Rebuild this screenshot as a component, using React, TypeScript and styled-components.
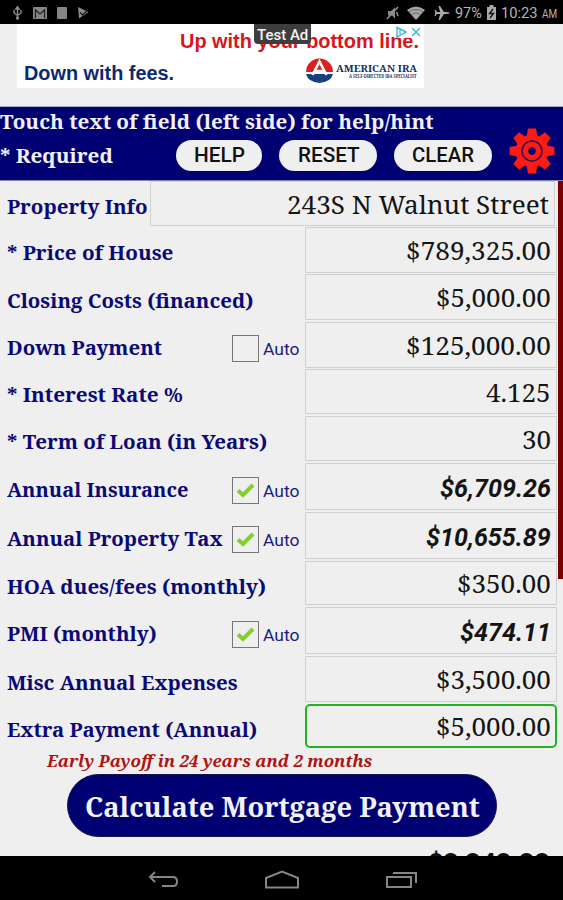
import React, { useLayoutEffect, useRef, useState } from "react";
import styled, { createGlobalStyle } from "styled-components";

const Global = createGlobalStyle`
  * { box-sizing: border-box; }
  body { margin: 0; background: #efefef; overflow: hidden; }
`;
const serif = `"Noto Serif", "Droid Serif", "DejaVu Serif Condensed", "DejaVu Serif", serif`;

const Screen = styled.div`
  width: 563px; height: 900px; display: flex; flex-direction: column;
  background: #efefef; overflow: hidden; font-family: ${serif};
`;
const FitBox = styled.span<{ $w: number }>`
  display: block; flex: none; width: ${p => p.$w}px; white-space: nowrap;
`;
const FitInner = styled.span`
  display: inline-block; transform-origin: 0 50%; white-space: nowrap;
`;
/* Condenses or widens a line of text so that it spans the given width. */
function Fit({ w, children }: { w: number; children: React.ReactNode }) {
  const ref = useRef<HTMLSpanElement>(null);
  const [scale, setScale] = useState(1);
  useLayoutEffect(() => {
    if (ref.current) setScale(w / ref.current.offsetWidth);
  }, [w]);
  return (
    <FitBox $w={w}>
      <FitInner ref={ref} style={{ transform: `scaleX(${scale})` }}>{children}</FitInner>
    </FitBox>
  );
}

const StatusBar = styled.header`
  height: 24px; flex: none; background: #000; color: #b4b4b4; display: flex;
  justify-content: space-between; padding: 1px 6px 0 12px; font: 15.5px/24px Roboto, sans-serif;
`;
const IconRow = styled.div<{ $gap: number }>`
  display: flex; align-items: center; gap: ${p => p.$gap}px;
`;
const Meridiem = styled.span`font-size: 12px; padding-top: 2px;`;
const AdArea = styled.section`
  height: 83px; flex: none; padding-left: 17px; border-bottom: 1px solid #a8a8cc;
`;
const Ad = styled.div`
  position: relative; width: 407px; height: 64px; background: #fff;
  font-family: "Liberation Sans", Arial, sans-serif; font-weight: 700; font-size: 20px; line-height: 24px;
`;
const AdTop = styled.div`color: #d9141c; padding: 5px 0 0 163px;`;
const AdBottom = styled.div`display: flex; color: #0a2a72; padding: 8px 0 0 7px;`;
const AdBadge = styled.div`
  position: absolute; left: 237px; top: 0; width: 57px; height: 20px; border-radius: 0 0 4px 4px;
  background: #3d3d3d; color: #f4f4f4; font: 500 15px/20px Roboto, sans-serif; padding: 1px 0 0 3px;
`;
const AdChoices = styled.div`position: absolute; left: 378px; top: 2px; height: 12px; display: flex; background: #fffc;`;
const Sponsor = styled.div`
  position: absolute; left: 288px; top: 33px; display: flex; gap: 2px;
`;
const SponsorText = styled.div`
  color: #17305f; font: 700 9.5px/9px ${serif}; padding-top: 7px; display: flex; flex-direction: column;
`;
const SponsorSmall = styled.div`font-size: 4.5px; line-height: 6px; padding-left: 13px;`;

const Banner = styled.section`
  height: 74px; flex: none; background: #000073; color: #f1f1fa; font-weight: 700; font-size: 20.5px; line-height: 28px;
  border-bottom: 1px solid #8585b0;
`;
const BannerRow = styled.div`display: flex; align-items: center; height: 40px;`;
const Required = styled.div`padding-bottom: 1px;`;
const Pill = styled.button<{ $w: number; $ml: number }>`
  width: ${p => p.$w}px; margin: 0 0 0 ${p => p.$ml}px; height: 31px; border: 0; border-radius: 16px;
  background: #efefef; color: #111; padding: 0; display: flex; justify-content: center; align-items: center;
  font: 500 20px/31px Roboto, sans-serif;
`;
const GearButton = styled.div`margin: -8px 0 0 17px; height: 46px;`;

const Body = styled.main`position: relative; flex: 1; min-height: 0; overflow: hidden;`;
const ScrollThumb = styled.div`
  position: absolute; right: 0; top: 0; width: 5px; height: 398px; background: #780000;
`;
const Row = styled.div<{ $h: number }>`
  display: flex; height: ${p => p.$h}px; padding-left: 7px;
`;
const Label = styled.div<{ $w: number }>`
  width: ${p => p.$w}px; flex: none; display: flex; align-items: center; justify-content: space-between;
  color: #0a0a76; font-weight: 700; font-size: 19.5px; line-height: 26px; padding-top: 5px;
`;
const Auto = styled.label`
  display: flex; align-items: center; gap: 4px; width: 73px; color: #1c1c7c;
  font: 17px/20px Roboto, sans-serif;
`;
const AutoText = styled.span`padding-top: 1px;`;
const Check = styled.span`
  width: 27px; height: 27px; border: 1.5px solid #777; display: flex; align-items: center; justify-content: center;
`;
const Field = styled.div<{ $w: number; $h: number; $focus?: boolean; $calc?: boolean }>`
  width: ${p => p.$w}px; height: ${p => p.$h}px; display: flex; align-items: center; justify-content: flex-end;
  border: ${p => (p.$focus ? "2px solid #1fb41f" : "1px solid #cfcfcf")};
  border-radius: ${p => (p.$focus ? 5 : 1)}px; padding-right: ${p => (p.$focus ? 4 : 5)}px; color: #141414;
  font: ${p => (p.$calc ? `italic 700 26.5px/34px Roboto, sans-serif` : `400 26px/34px ${serif}`)};
  padding-top: ${p => (p.$calc ? 2 : 0)}px;
`;
const Note = styled.div`
  height: 24px; padding-left: 47px; color: #ad1414; font-style: italic; font-weight: 700; font-size: 17px; line-height: 22px;
`;
const Calculate = styled.button`
  display: flex; align-items: center; justify-content: center; width: 430px; height: 63px; margin: 0 0 0 67px;
  padding: 2px 4px 0 0; border: 1px solid #16164d; border-radius: 32px; background: #000073; color: #f1f1fa;
  font: 700 27px/38px ${serif};
`;
const Total = styled.div`
  display: flex; justify-content: flex-end; padding: 10px 13px 0 0; color: #111; font: 700 25px/34px Roboto, sans-serif;
`;
const NavBar = styled.footer`
  height: 44px; flex: none; background: #000; display: flex; align-items: center; padding: 4px 0 0 147px; gap: 85px;
`;

const rows = [
  { label: "* Price of House", lw: 166, value: "$789,325.00", vw: 145, h: 47, fh: 46 },
  { label: "Closing Costs (financed)", lw: 246, value: "$5,000.00", vw: 115, h: 48, fh: 46 },
  { label: "Down Payment", lw: 155, value: "$125,000.00", vw: 145, h: 47, fh: 46, auto: true },
  { label: "* Interest Rate %", lw: 176, value: "4.125", vw: 65, h: 47, fh: 45 },
  { label: "* Term of Loan (in Years)", lw: 260, value: "30", vw: 29, h: 47, fh: 45 },
  { label: "Annual Insurance", lw: 182, value: "$6,709.26", vw: 111, h: 49, fh: 47, auto: true, on: true },
  { label: "Annual Property Tax", lw: 216, value: "$10,655.89", vw: 125, h: 49, fh: 47, auto: true, on: true },
  { label: "HOA dues/fees (monthly)", lw: 259, value: "$350.00", vw: 94, h: 46, fh: 44 },
  { label: "PMI (monthly)", lw: 150, value: "$474.11", vw: 91, h: 49, fh: 47, auto: true, on: true },
  { label: "Misc Annual Expenses", lw: 230, value: "$3,500.00", vw: 115, h: 48, fh: 46 },
  { label: "Extra Payment (Annual)", lw: 250, value: "$5,000.00", vw: 115, h: 46, fh: 44, focus: true },
];

const teeth = [0, 45, 90, 135, 180, 225, 270, 315];
const Gear = () => (
  <svg width="46" height="46" viewBox="-23 -23 46 46">
    <g fill="#fb1c14">
      {teeth.map(a => <path key={a} d="M-5.5-14L-4-22.4H4L5.5-14Z" transform={`rotate(${a})`} />)}
      <circle r="16.3" />
    </g>
    <circle r="10" fill="none" stroke="#3c0a58" strokeWidth="1.5" />
    <circle r="3.7" fill="#000073" />
  </svg>
);

const Tick = () => (
  <svg width="19" height="17" viewBox="0 0 19 17">
    <path d="M2 8.5L7 13L17 3" fill="none" stroke="#84d02a" strokeWidth="4" />
  </svg>
);

export default function App() {
  return (
    <Screen>
      <Global />
      <StatusBar>
        <IconRow $gap={10}>
          <svg width="11" height="14" viewBox="0 0 11 14" fill="none" stroke="#8a8a8a" strokeWidth="1.4">
            <path d="M5.5 2V12M2 4V7L5.5 9.5L9 7V4" /><path d="M3.8 3L5.5 .6L7.2 3Z" fill="#8a8a8a" /><circle cx="5.5" cy="12" r="1" />
          </svg>
          <svg width="14" height="12" viewBox="0 0 14 12">
            <rect width="14" height="12" rx="1" fill="#858585" /><path d="M2.5 11V3L7 7L11.5 3V11" fill="none" stroke="#222" strokeWidth="1.3" />
          </svg>
          <svg width="10" height="12" viewBox="0 0 10 12"><rect width="10" height="12" rx="1" fill="#858585" /></svg>
          <svg width="12" height="12" viewBox="0 0 12 12">
            <path d="M1 0L11.5 5L2 11.5Z" fill="#8a8a8a" /><path d="M3 5.5L5.5 8L11 3" fill="none" stroke="#111" strokeWidth="1.2" />
          </svg>
        </IconRow>
        <IconRow $gap={4}>
          <svg width="17" height="14" viewBox="0 0 17 14" fill="none" stroke="#969696" strokeWidth="1.5">
            <path d="M1 13L12 1" /><path d="M2 5H5L9 1.5V12.5L6 9.5H2Z" fill="#8a8a8a" stroke="none" /><path d="M10.5 6L12 10" />
          </svg>
          <svg width="18" height="14" viewBox="0 0 18 14"><path d="M0 4Q9-3 18 4L9 14Z" fill="#a6a6a6" /><path d="M2 6Q9 1 16 6M4.5 9Q9 5 13.5 9" fill="none" stroke="#555" strokeWidth=".8" /></svg>
          <svg width="22" height="16" viewBox="-5 0 22 16"><path d="M16 8Q15 6.8 10 7L6 1H4.5L6.2 7H3L1.5 5H.5L1.3 8L.5 11H1.5L3 9H6.2L4.5 15H6L10 9Q15 9.2 16 8Z" fill="#aaa" /></svg>
          <Fit w={27}>97%</Fit>
          <svg width="11" height="15" viewBox="0 0 11 15"><path d="M3.5 0H7.5V2H10V15H1V2H3.5Z" fill="#aaa" /><path d="M7 4L3.5 8.5H7.5L4 13" fill="none" stroke="#111" strokeWidth="1.3" /></svg>
          <Fit w={37}>10:23</Fit>
          <Meridiem><Fit w={15}>AM</Fit></Meridiem>
        </IconRow>
      </StatusBar>

      <AdArea>
        <Ad>
          <AdTop><Fit w={239}>Up with your bottom line.</Fit></AdTop>
          <AdBottom><Fit w={150}>Down with fees.</Fit></AdBottom>
          <Sponsor>
            <svg width="29" height="26" viewBox="0 0 29 26">
              <path d="M1 15A13.5 13.5 0 0 1 28 15Z" fill="#d9211e" /><path d="M1 17H28Q26 25 14.5 26Q3 25 1 17Z" fill="#17417c" />
              <path d="M7.5 18L14.5 4.5L21.5 18M10.5 14H18.5" fill="none" stroke="#fff" strokeWidth="2.6" />
            </svg>
            <SponsorText><Fit w={81}>AMERICAN IRA</Fit><SponsorSmall><Fit w={68}>A SELF-DIRECTED IRA SPECIALIST</Fit></SponsorSmall></SponsorText>
          </Sponsor>
          <AdChoices>
            <svg width="26" height="12" viewBox="0 0 26 12" fill="none" stroke="#3bb5d6" strokeWidth="1.4"><path d="M2 1.5L11 6L2 11ZM5 4V8M17 2L25 10M25 2L17 10" /></svg>
          </AdChoices>
          <AdBadge><Fit w={51}>Test Ad</Fit></AdBadge>
        </Ad>
      </AdArea>

      <Banner>
        <Fit w={434}>Touch text of field (left side) for help/hint</Fit>
        <BannerRow>
          <Required><Fit w={113}>* Required</Fit></Required>
          <Pill $w={86} $ml={63}><Fit w={51}>HELP</Fit></Pill>
          <Pill $w={98} $ml={17}><Fit w={62}>RESET</Fit></Pill>
          <Pill $w={98} $ml={17}><Fit w={62}>CLEAR</Fit></Pill>
          <GearButton><Gear /></GearButton>
        </BannerRow>
      </Banner>

      <Body>
        <Row $h={46}>
          <Label $w={143}><Fit w={141}>Property Info</Fit></Label>
          <Field $w={405} $h={45}><Fit w={262}>243S N Walnut Street</Fit></Field>
        </Row>
        {rows.map(r => (
          <Row key={r.label} $h={r.h}>
            <Label $w={298}>
              <Fit w={r.lw}>{r.label}</Fit>
              {r.auto && <Auto><Check>{r.on && <Tick />}</Check><AutoText><Fit w={36}>Auto</Fit></AutoText></Auto>}
            </Label>
            <Field $w={252} $h={r.fh} $focus={r.focus} $calc={r.on}><Fit w={r.vw}>{r.value}</Fit></Field>
          </Row>
        ))}
        <Note><Fit w={325}>Early Payoff in 24 years and 2 months</Fit></Note>
        <Calculate><Fit w={395}>Calculate Mortgage Payment</Fit></Calculate>
        <Total><Fit w={122}>$3,343.33</Fit></Total>
        <ScrollThumb />
      </Body>

      <NavBar>
        <svg width="32" height="18" viewBox="0 0 32 18" fill="none" stroke="#858585" strokeWidth="2"><path d="M8 1L3 6L8 11M3 6H26Q30 6 30 10.5Q30 15 26 15H15" /></svg>
        <svg width="36" height="20" viewBox="0 0 36 20" fill="none" stroke="#858585" strokeWidth="2"><path d="M2 17.5V8L18 1.5L34 8V17.5Z" /></svg>
        <svg width="33" height="18" viewBox="0 0 33 18" fill="none" stroke="#858585" strokeWidth="2"><path d="M2 6H26V16H2ZM8 2H31V12" /></svg>
      </NavBar>
    </Screen>
  );
}
